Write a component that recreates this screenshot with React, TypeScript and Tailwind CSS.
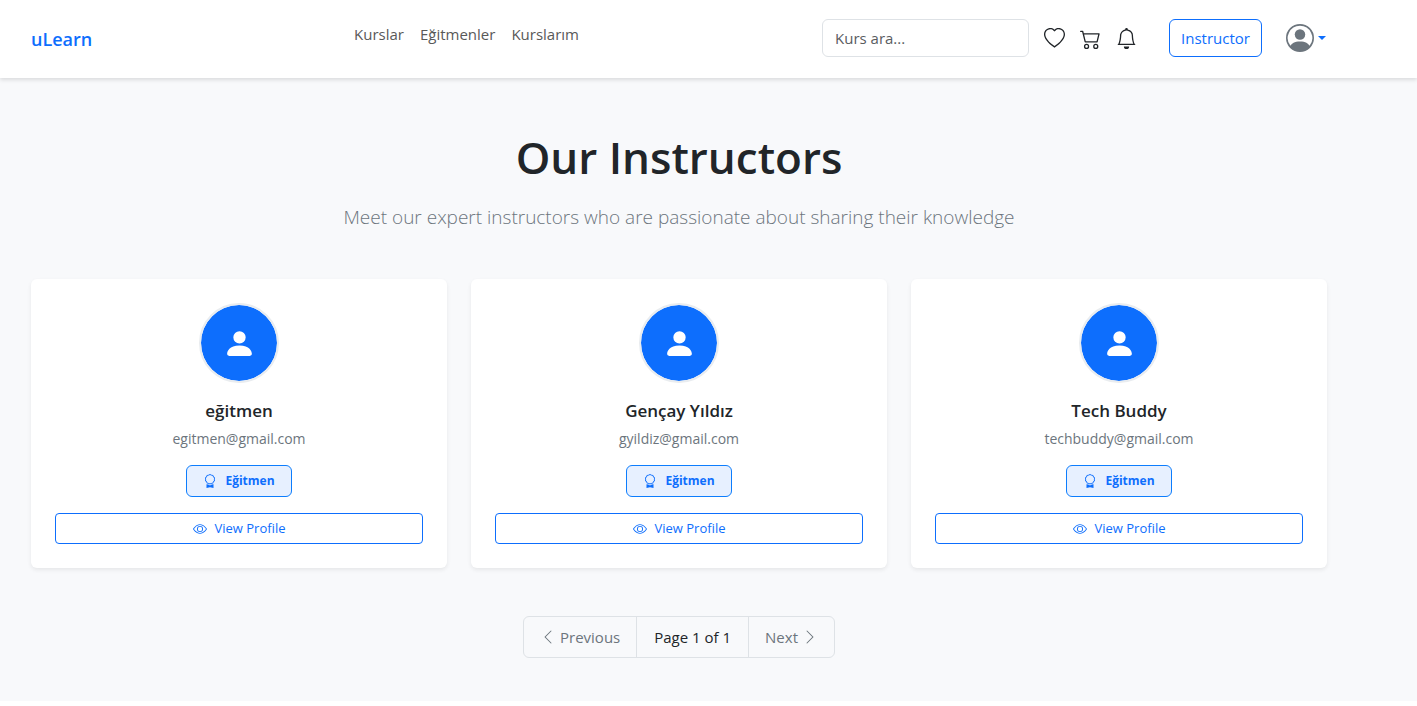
import {
  BsAward,
  BsBell,
  BsCart2,
  BsChevronLeft,
  BsChevronRight,
  BsEye,
  BsHeart,
  BsPersonCircle,
  BsPersonFill,
} from "react-icons/bs";

type Instructor = { name: string; email: string };

const instructors: Instructor[] = [
  { name: "eğitmen", email: "egitmen@gmail.com" },
  { name: "Gençay Yıldız", email: "gyildiz@gmail.com" },
  { name: "Tech Buddy", email: "techbuddy@gmail.com" },
];

const links = ["Kurslar", "Eğitmenler", "Kurslarım"];

function Header() {
  return (
    <header className="relative flex h-[78px] items-center bg-white pl-[31px] pr-[91px] shadow-[0_2px_4px_rgba(0,0,0,0.12)]">
      <a href="#home" className="w-[315px] shrink-0 text-[18px] leading-7 font-semibold text-[#0d6efd]">
        uLearn
      </a>
      <nav aria-label="Main" className="flex pb-2.5">
        {links.map((link) => (
          <a key={link} href={"#" + link} className="px-2 text-[15px] leading-6 text-[#595959]">
            {link}
          </a>
        ))}
      </nav>
      <div className="ml-auto flex items-center pb-0.5">
        <input
          type="search"
          aria-label="Kurs ara"
          placeholder="Kurs ara..."
          className="h-[38px] w-[207px] rounded-md border border-[#dee2e6] bg-white px-3 text-[15px] text-[#212529] placeholder:text-[#595c5f]"
        />
        <div className="ml-[15px] flex items-center gap-[15px] text-[21px] text-[#212529]">
          <button type="button" aria-label="Favoriler">
            <BsHeart />
          </button>
          <button type="button" aria-label="Sepet">
            <BsCart2 />
          </button>
          <button type="button" aria-label="Bildirimler">
            <BsBell />
          </button>
        </div>
        <button
          type="button"
          className="ml-8 h-[38px] w-[93px] rounded-md border border-[#0d6efd] text-[15px] text-[#0d6efd]"
        >
          Instructor
        </button>
        <button type="button" aria-label="Hesap" className="ml-6 flex items-center gap-1 text-[#6c757d]">
          <BsPersonCircle className="size-[28px]" />
          <svg viewBox="0 0 8 4" className="h-1 w-2 fill-[#0d6efd]" aria-hidden="true">
            <path d="M0 0h8L4 4z" />
          </svg>
        </button>
      </div>
    </header>
  );
}

function InstructorCard({ name, email }: Instructor) {
  return (
    <article className="flex flex-col items-center rounded-md bg-white p-6 shadow-[0_2px_4px_rgba(0,0,0,0.075)]">
      <div className="flex size-20 items-center justify-center rounded-full border-2 border-[#e9ecef] bg-[#0d6efd] bg-clip-padding text-white">
        <BsPersonFill className="size-[33px]" />
      </div>
      <h2 className="mt-4 text-[17px] leading-6 font-semibold text-[#212529]">{name}</h2>
      <p className="mt-1.5 text-[14px] leading-5 text-[#6c757d]">{email}</p>
      <span className="mt-4 flex h-8 items-center gap-2 rounded-md border border-[#0d7dfd] bg-[#e7f0ff] px-4 text-[12px] font-bold text-[#0d6efd]">
        <BsAward className="size-[14px]" />
        Eğitmen
      </span>
      <a
        href="#profile"
        className="mt-4 flex h-[31px] items-center justify-center gap-2 self-stretch rounded-sm border border-[#0d6efd] text-[13px] text-[#0d6efd]"
      >
        <BsEye className="size-[14px]" />
        View Profile
      </a>
    </article>
  );
}

function Pagination() {
  return (
    <nav
      aria-label="Pagination"
      className="mx-auto mt-12 flex h-[42px] w-fit divide-x divide-[#dee2e6] rounded-md border border-[#dee2e6] text-[15px] text-[#6c757d]"
    >
      <button type="button" disabled className="flex items-center gap-1 px-4">
        <BsChevronLeft className="size-4" />
        Previous
      </button>
      <span className="flex items-center px-[17px] text-[#212529]">Page 1 of 1</span>
      <button type="button" disabled className="flex items-center gap-1 px-4">
        Next
        <BsChevronRight className="size-4" />
      </button>
    </nav>
  );
}

export default function App() {
  return (
    <div className="bg-white font-['Open_Sans','Noto_Sans',sans-serif]">
      <Header />
      <main className="bg-[#f8f9fb] pt-[49px] pr-[90px] pb-[43px] pl-[31px]">
        <h1 className="text-center text-[44px] leading-[60px] font-semibold text-[#212529]">Our Instructors</h1>
        <p className="mt-[15px] text-center text-[19px] leading-[30px] font-light text-[#6c757d]">
          Meet our expert instructors who are passionate about sharing their knowledge
        </p>
        <section aria-label="Instructors" className="mt-[47px] grid grid-cols-3 gap-6">
          {instructors.map((person) => (
            <InstructorCard key={person.email} {...person} />
          ))}
        </section>
        <Pagination />
      </main>
    </div>
  );
}
